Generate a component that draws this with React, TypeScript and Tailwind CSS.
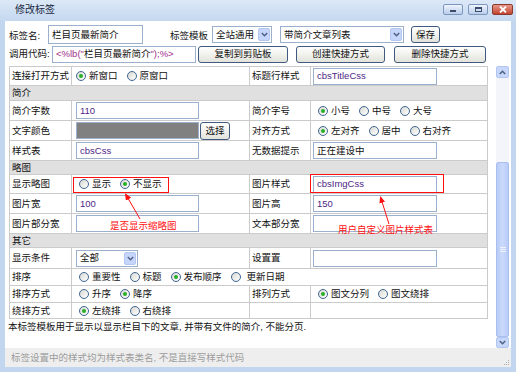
import React from 'react';

type Kids = { children?: React.ReactNode };

const Chevron: React.FC<{ up?: boolean }> = ({ up }) => (
  <svg width="7" height="5" viewBox="0 0 7 5">
    <path d={up ? 'M0.8 4 L3.5 1.3 L6.2 4' : 'M0.8 1 L3.5 3.7 L6.2 1'} fill="none" stroke="#4d6185" strokeWidth="1.5" />
  </svg>
);

const Radio: React.FC<{ label: string; checked?: boolean; spaced?: boolean }> = ({ label, checked, spaced }) => (
  <span className="flex items-center mr-[9px]">
    <span className={`w-[10px] h-[10px] rounded-full border border-[#3f6592] bg-gradient-to-br from-[#d9d9d2] to-white flex items-center justify-center ${spaced ? 'mr-[6px]' : 'mr-[3px]'}`}>
      {checked && <span className="w-[4px] h-[4px] rounded-full bg-[#27b027]" />}
    </span>
    {label}
  </span>
);

const Input: React.FC<Kids & { w: string; purple?: boolean }> = ({ w, purple, children }) => (
  <div className={`h-[17px] ${w} border border-[#9bb0cc] bg-white flex items-center px-[3px] ${purple ? 'text-[#4f1f86]' : 'text-[#111]'}`}>
    {children}
  </div>
);

const Select: React.FC<Kids & { w: string }> = ({ w, children }) => (
  <div className={`h-[17px] ${w} border border-[#9bb0cc] bg-white flex items-center pl-[3px] pr-[1px]`}>
    <span className="flex-1">{children}</span>
    <span className="w-[12px] h-[13px] rounded-[2px] bg-[#c6d6fb] border border-[#b4c7f1] flex items-center justify-center">
      <Chevron />
    </span>
  </div>
);

const Btn: React.FC<Kids & { w: string }> = ({ w, children }) => (
  <div className={`h-[17px] ${w} rounded-[3px] border border-[#40597f] bg-gradient-to-b from-white to-[#e3e3dc] flex items-center justify-center`}>
    {children}
  </div>
);

const Cell: React.FC<Kids & { pad?: string; span?: string }> = ({ children, pad = 'pl-[2px]', span = '' }) => (
  <div className={`border-r border-b border-[#cbcbcb] flex items-center ${pad} ${span}`}>{children}</div>
);

const Row: React.FC<{ h: string; c1: React.ReactNode; c2?: React.ReactNode; c3?: React.ReactNode; c4?: React.ReactNode; wide?: boolean }> = ({ h, c1, c2, c3, c4, wide }) => (
  <div className={`grid grid-cols-[62px_178px_61px_177px] ${h}`}>
    <Cell>{c1}</Cell>
    {wide ? (
      <Cell pad="pl-[7px]" span="col-span-3">{c2}</Cell>
    ) : (
      <>
        <Cell pad="pl-[4px]">{c2}</Cell>
        <Cell>{c3}</Cell>
        <Cell pad="pl-[2px]">{c4}</Cell>
      </>
    )}
  </div>
);

const Head: React.FC<{ h: string; label: string }> = ({ h, label }) => (
  <div className={`${h} bg-[#e0e0e0] border-r border-b border-[#cbcbcb] flex items-center pl-[2px]`}>{label}</div>
);

export default function App() {
  return (
    <div className="relative w-[516px] h-[372px] bg-[#c2d6ef] flex flex-col font-['Liberation_Sans','Noto_Sans_CJK_SC',sans-serif] text-[9.5px] leading-none text-[#111] overflow-hidden">
      {/* title bar */}
      <div className="h-[21px] shrink-0 flex items-center bg-gradient-to-b from-[#dce8f7] to-[#c4d8f0] pl-[15px] pr-[3px]">
        <span className="text-[10px] text-[#1a2a42] mt-[-1px]">修改标签</span>
        <div className="ml-auto flex items-center mt-[-2px]">
          <div className="w-[20px] h-[11px] rounded-[2px] border border-[#7d96bd] bg-gradient-to-b from-[#eef4fc] to-[#b9cdea] flex items-end justify-center pb-[2px]">
            <span className="w-[6px] h-[2px] bg-[#3b4d6b]" />
          </div>
          <div className="ml-[5px] w-[20px] h-[11px] rounded-[2px] border border-[#7d96bd] bg-gradient-to-b from-[#eef4fc] to-[#b9cdea] flex items-center justify-center">
            <span className="w-[7px] h-[5px] border border-[#3b4d6b] border-t-2" />
          </div>
          <div className="ml-[4px] w-[21px] h-[11px] rounded-[2px] border border-[#8a3b2e] bg-gradient-to-b from-[#e8968a] to-[#c2432f] flex items-center justify-center">
            <svg width="8" height="7" viewBox="0 0 8 7">
              <path d="M1 0.5 L7 6.5 M7 0.5 L1 6.5" stroke="white" strokeWidth="1.8" />
            </svg>
          </div>
        </div>
      </div>

      {/* client */}
      <div className="mx-[5px] h-[346px] bg-white flex flex-col">
        <div className="mt-[4px] h-[19px] flex items-center pl-[4px]">
          <span className="w-[39px] pt-[2px]">标签名:</span>
          <Input w="w-[95px] h-[19px]">栏目页最新简介</Input>
          <span className="ml-[27px] w-[42px] pt-[3px]">标签模板</span>
          <Select w="w-[60px]">全站通用</Select>
          <span className="w-[8px]" />
          <Select w="w-[124px]">带简介文章列表</Select>
          <span className="w-[7px]" />
          <Btn w="w-[29px]">保存</Btn>
        </div>
        <div className="mt-[1px] h-[18px] flex items-center pl-[4px]">
          <span className="w-[43px]">调用代码:</span>
          <Input w="w-[144px]">
            <span className="text-[#a0308c]">&lt;%lb("</span>
            <span>栏目页最新简介</span>
            <span className="text-[#a0308c]">");%&gt;</span>
          </Input>
          <span className="w-[2px]" />
          <Btn w="w-[90px]">复制到剪贴板</Btn>
          <span className="w-[8px]" />
          <Btn w="w-[89px]">创建快捷方式</Btn>
          <span className="w-[9px]" />
          <Btn w="w-[92px]">删除快捷方式</Btn>
        </div>

        {/* scroll area */}
        <div className="mt-[3px] h-[282px] flex">
          <div className="w-[491px] pl-[4px] overflow-hidden">
            <div className="w-[479px] border-l border-t border-[#cbcbcb]">
              <Row
                h="h-[19px]"
                c1="连接打开方式"
                c2={<div className="flex"><Radio label="新窗口" checked /><Radio label="原窗口" /></div>}
                c3="标题行样式"
                c4={<Input w="w-[124px]" purple>cbsTitleCss</Input>}
              />
              <Head h="h-[15px]" label="简介" />
              <Row
                h="h-[20px]"
                c1="简介字数"
                c2={<Input w="w-[123px]" purple>110</Input>}
                c3="简介字号"
                c4={<div className="flex pl-[5px]"><Radio label="小号" checked /><Radio label="中号" /><Radio label="大号" /></div>}
              />
              <Row
                h="h-[20px]"
                c1="文字颜色"
                c2={
                  <div className="flex items-center">
                    <span className="w-[123px] h-[17px] bg-[#808080] border border-[#9bb0cc]" />
                    <span className="w-[1px]" />
                    <Btn w="w-[30px] h-[18px]">选择</Btn>
                  </div>
                }
                c3="对齐方式"
                c4={<div className="flex pl-[5px]"><Radio label="左对齐" checked /><Radio label="居中" /><Radio label="右对齐" /></div>}
              />
              <Row
                h="h-[20px]"
                c1="样式表"
                c2={<Input w="w-[123px]" purple>cbsCss</Input>}
                c3="无数据提示"
                c4={<Input w="w-[124px]">正在建设中</Input>}
              />
              <Head h="h-[14px]" label="略图" />
              <Row
                h="h-[19px]"
                c1="显示略图"
                c2={<div className="flex pl-[3px]"><Radio label="显示" /><Radio label="不显示" checked /></div>}
                c3="图片样式"
                c4={<Input w="w-[124px]" purple>cbsImgCss</Input>}
              />
              <Row
                h="h-[20px]"
                c1="图片宽"
                c2={<Input w="w-[123px]" purple>100</Input>}
                c3="图片高"
                c4={<Input w="w-[124px]" purple>150</Input>}
              />
              <Row
                h="h-[20px]"
                c1="图片部分宽"
                c2={<Input w="w-[123px]" />}
                c3="文本部分宽"
                c4={<Input w="w-[124px]" />}
              />
              <Head h="h-[14px]" label="其它" />
              <Row
                h="h-[21px]"
                c1="显示条件"
                c2={<Select w="w-[62px]">全部</Select>}
                c3="设置置"
                c4={<Input w="w-[124px]" />}
              />
              <Row
                h="h-[17px]"
                c1="排序"
                wide
                c2={
                  <div className="flex">
                    <Radio label="重要性" />
                    <Radio label="标题" />
                    <Radio label="发布顺序" checked />
                    <Radio label="更新日期" spaced />
                  </div>
                }
              />
              <Row
                h="h-[17px]"
                c1="排序方式"
                c2={<div className="flex pl-[3px]"><Radio label="升序" /><Radio label="降序" checked /></div>}
                c3="排列方式"
                c4={<div className="flex pl-[5px]"><Radio label="图文分列" checked /><Radio label="图文绕排" /></div>}
              />
              <Row
                h="h-[16px]"
                c1="绕排方式"
                c2={<div className="flex pl-[3px]"><Radio label="左绕排" checked /><Radio label="右绕排" /></div>}
              />
            </div>
            <p className="ml-[-1px] mt-[3px]">本标签模板用于显示以显示栏目下的文章, 并带有文件的简介, 不能分页.</p>
          </div>

          {/* scrollbar */}
          <div className="w-[13px] flex flex-col">
            <div className="h-[12px] rounded-[2px] bg-[#c7d7fb] border border-[#b3c6f0] flex items-center justify-center">
              <Chevron up />
            </div>
            <div className="h-[84px] bg-[#f3f5fa]" />
            <div className="h-[175px] rounded-[2px] bg-gradient-to-r from-[#b8cbf7] via-[#cbdafc] to-[#b8cbf7] border border-[#a9bfef] flex flex-col items-center justify-center gap-[1px]">
              <span className="w-[6px] h-[1px] bg-[#eef3fe]" />
              <span className="w-[6px] h-[1px] bg-[#eef3fe]" />
              <span className="w-[6px] h-[1px] bg-[#eef3fe]" />
            </div>
            <div className="h-[11px] rounded-[2px] bg-[#c7d7fb] border border-[#b3c6f0] flex items-center justify-center">
              <Chevron />
            </div>
          </div>
        </div>

        {/* status bar */}
        <div className="h-[19px] bg-[#eeeeee] flex items-center pl-[6px] text-[#9c9c9c] relative">
          标签设置中的样式均为样式表类名, 不是直接写样式代码
          <svg className="absolute right-[1px] bottom-[1px]" width="8" height="8" viewBox="0 0 8 8">
            <rect x="6" y="2" width="1" height="1" fill="#b0b0b0" />
            <rect x="4" y="4" width="1" height="1" fill="#b0b0b0" />
            <rect x="6" y="4" width="1" height="1" fill="#b0b0b0" />
            <rect x="2" y="6" width="1" height="1" fill="#b0b0b0" />
            <rect x="4" y="6" width="1" height="1" fill="#b0b0b0" />
            <rect x="6" y="6" width="1" height="1" fill="#b0b0b0" />
          </svg>
        </div>
      </div>

      {/* annotations */}
      <div className="absolute left-[73px] top-[177px] w-[96px] h-[16px] border border-[#ff1010]" />
      <div className="absolute left-[310px] top-[174px] w-[134px] h-[19px] border border-[#ff1010]" />
      <span className="absolute left-[110px] top-[221px] text-[#ff1010]">是否显示缩略图</span>
      <span className="absolute left-[338px] top-[225px] text-[#ff1010]">用户自定义图片样式表</span>
      <svg className="absolute left-0 top-0 pointer-events-none" width="516" height="372">
        <defs>
          <marker id="ah" markerWidth="7" markerHeight="6" refX="6" refY="3" orient="auto" markerUnits="userSpaceOnUse">
            <path d="M0,0 L7,3 L0,6 z" fill="#ff1010" />
          </marker>
        </defs>
        <line x1="140" y1="219" x2="125.5" y2="194" stroke="#ff1010" strokeWidth="1" markerEnd="url(#ah)" />
        <line x1="389" y1="224" x2="380.5" y2="197" stroke="#ff1010" strokeWidth="1" markerEnd="url(#ah)" />
      </svg>
    </div>
  );
}
